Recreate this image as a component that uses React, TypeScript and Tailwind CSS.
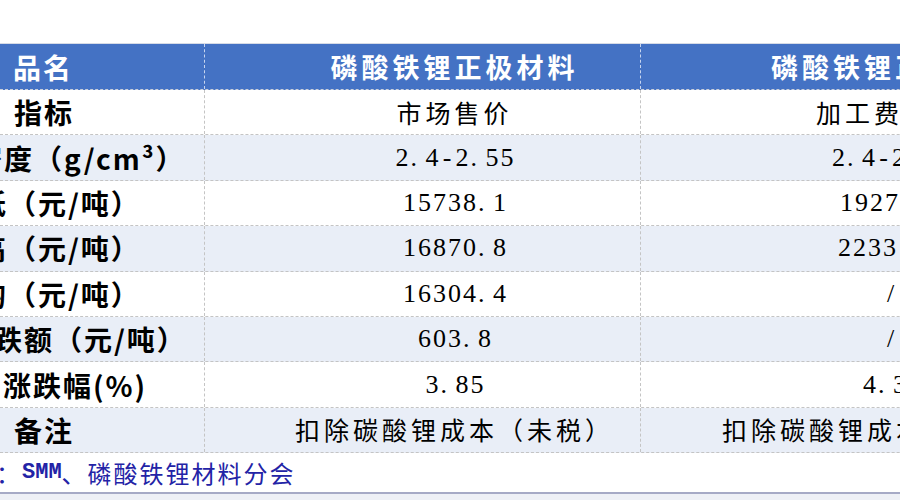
import React from "react";

type Row = {
  label: string;
  lcls: string;
  mid: string;
  midMono?: boolean;
  right: string;
  rcls: string;
  rightMono?: boolean;
  shade: boolean;
};

const rows: Row[] = [
  { label: "指标", lcls: "ml-[14px]", mid: "市场售价", right: "加工费", rcls: "pl-[175px]", shade: false },
  { label: "密度（g/cm³）", lcls: "-ml-[26px]", mid: "2.4-2.55", midMono: true, right: "2.4-2.55", rcls: "pl-[190px]", rightMono: true, shade: true },
  { label: "最低（元/吨）", lcls: "-ml-[52px]", mid: "15738.1", midMono: true, right: "1927", rcls: "pl-[198px]", rightMono: true, shade: false },
  { label: "最高（元/吨）", lcls: "-ml-[52px]", mid: "16870.8", midMono: true, right: "2233", rcls: "pl-[196px]", rightMono: true, shade: true },
  { label: "平均（元/吨）", lcls: "-ml-[52px]", mid: "16304.4", midMono: true, right: "/", rcls: "pl-[242px]", rightMono: true, shade: false },
  { label: "涨跌额（元/吨）", lcls: "-ml-[36px]", mid: "603.8", midMono: true, right: "/", rcls: "pl-[242px]", rightMono: true, shade: true },
  { label: "涨跌幅(%)", lcls: "ml-[3px]", mid: "3.85", midMono: true, right: "4.3", rcls: "pl-[221px]", rightMono: true, shade: false },
  { label: "备注", lcls: "ml-[14px]", mid: "扣除碳酸锂成本（未税）", right: "扣除碳酸锂成本（未税）", rcls: "pl-[81px]", shade: true },
];

const CJK = "font-['Noto_Sans_CJK_SC',sans-serif]";

function Num({ text }: { text: string }) {
  return (
    <span className="inline-flex font-['Liberation_Serif','Noto_Sans_CJK_SC',serif] text-[26px] leading-none text-black">
      {[...text].map((c, i) => (
        <span key={i} className={c === "." ? "w-[15px] pl-[1px] text-left" : "w-[15px] text-center"}>
          {c}
        </span>
      ))}
    </span>
  );
}

function cellText(text: string, mono?: boolean) {
  return mono ? (
    <Num text={text} />
  ) : (
    <span className={`${CJK} text-[25px] tracking-[4px] leading-none text-black`}>{text}</span>
  );
}

export default function App() {
  return (
    <div className={`w-[900px] h-[500px] overflow-hidden bg-white ${CJK}`}>
      <div className="h-[44px] border-b border-[#d6dbe6]" />
      <div className="w-[1100px]">
        <div className="flex h-[46px] bg-[#4472c4] border-b border-dashed border-[#c9cfdb]">
          <div className="w-[205px] shrink-0 flex items-center overflow-hidden border-r border-dashed border-[#c7d5ef]">
            <span className="ml-[13px] text-[28px] tracking-[2px] font-bold leading-none text-white">品名</span>
          </div>
          <div className="w-[436px] shrink-0 flex items-center justify-center pl-[64px] border-r border-dashed border-[#c7d5ef]">
            <span className="text-[27px] tracking-[4px] font-bold leading-none text-white">磷酸铁锂正极材料</span>
          </div>
          <div className="w-[436px] shrink-0 flex items-center pl-[130px]">
            <span className="text-[27px] tracking-[4px] font-bold leading-none text-white whitespace-nowrap">磷酸铁锂正极材料</span>
          </div>
        </div>
        {rows.map((r, i) => (
          <div
            key={i}
            className={`flex h-[45.4px] border-b border-dashed border-[#c4c4c4] ${r.shade ? "bg-[#e9eef7]" : "bg-white"}`}
          >
            <div className="w-[205px] shrink-0 flex items-center overflow-hidden border-r border-dashed border-[#c4c4c4]">
              <span className={`${r.lcls} whitespace-nowrap text-[28px] tracking-[2px] font-bold leading-none text-black`}>
                {r.label}
              </span>
            </div>
            <div className="w-[436px] shrink-0 flex items-center justify-center pl-[64px] border-r border-dashed border-[#c4c4c4] whitespace-nowrap">
              {cellText(r.mid, r.midMono)}
            </div>
            <div className={`w-[436px] shrink-0 flex items-center whitespace-nowrap ${r.rcls}`}>
              {cellText(r.right, r.rightMono)}
            </div>
          </div>
        ))}
      </div>
      <div className="h-[41px] flex items-center border-b-2 border-[#a6aac6] whitespace-nowrap">
        <span className="-ml-[4px] text-[24px] tracking-[2px] leading-none text-[#2323a6]">：</span>
        <span className="font-['Liberation_Mono',monospace] font-bold text-[22px] leading-none text-[#2323a6]">SMM</span>
        <span className="text-[24px] tracking-[2px] leading-none text-[#2323a6]">、磷酸铁锂材料分会</span>
      </div>
      <div className="h-[8px] bg-[#eef0f6]" />
    </div>
  );
}
